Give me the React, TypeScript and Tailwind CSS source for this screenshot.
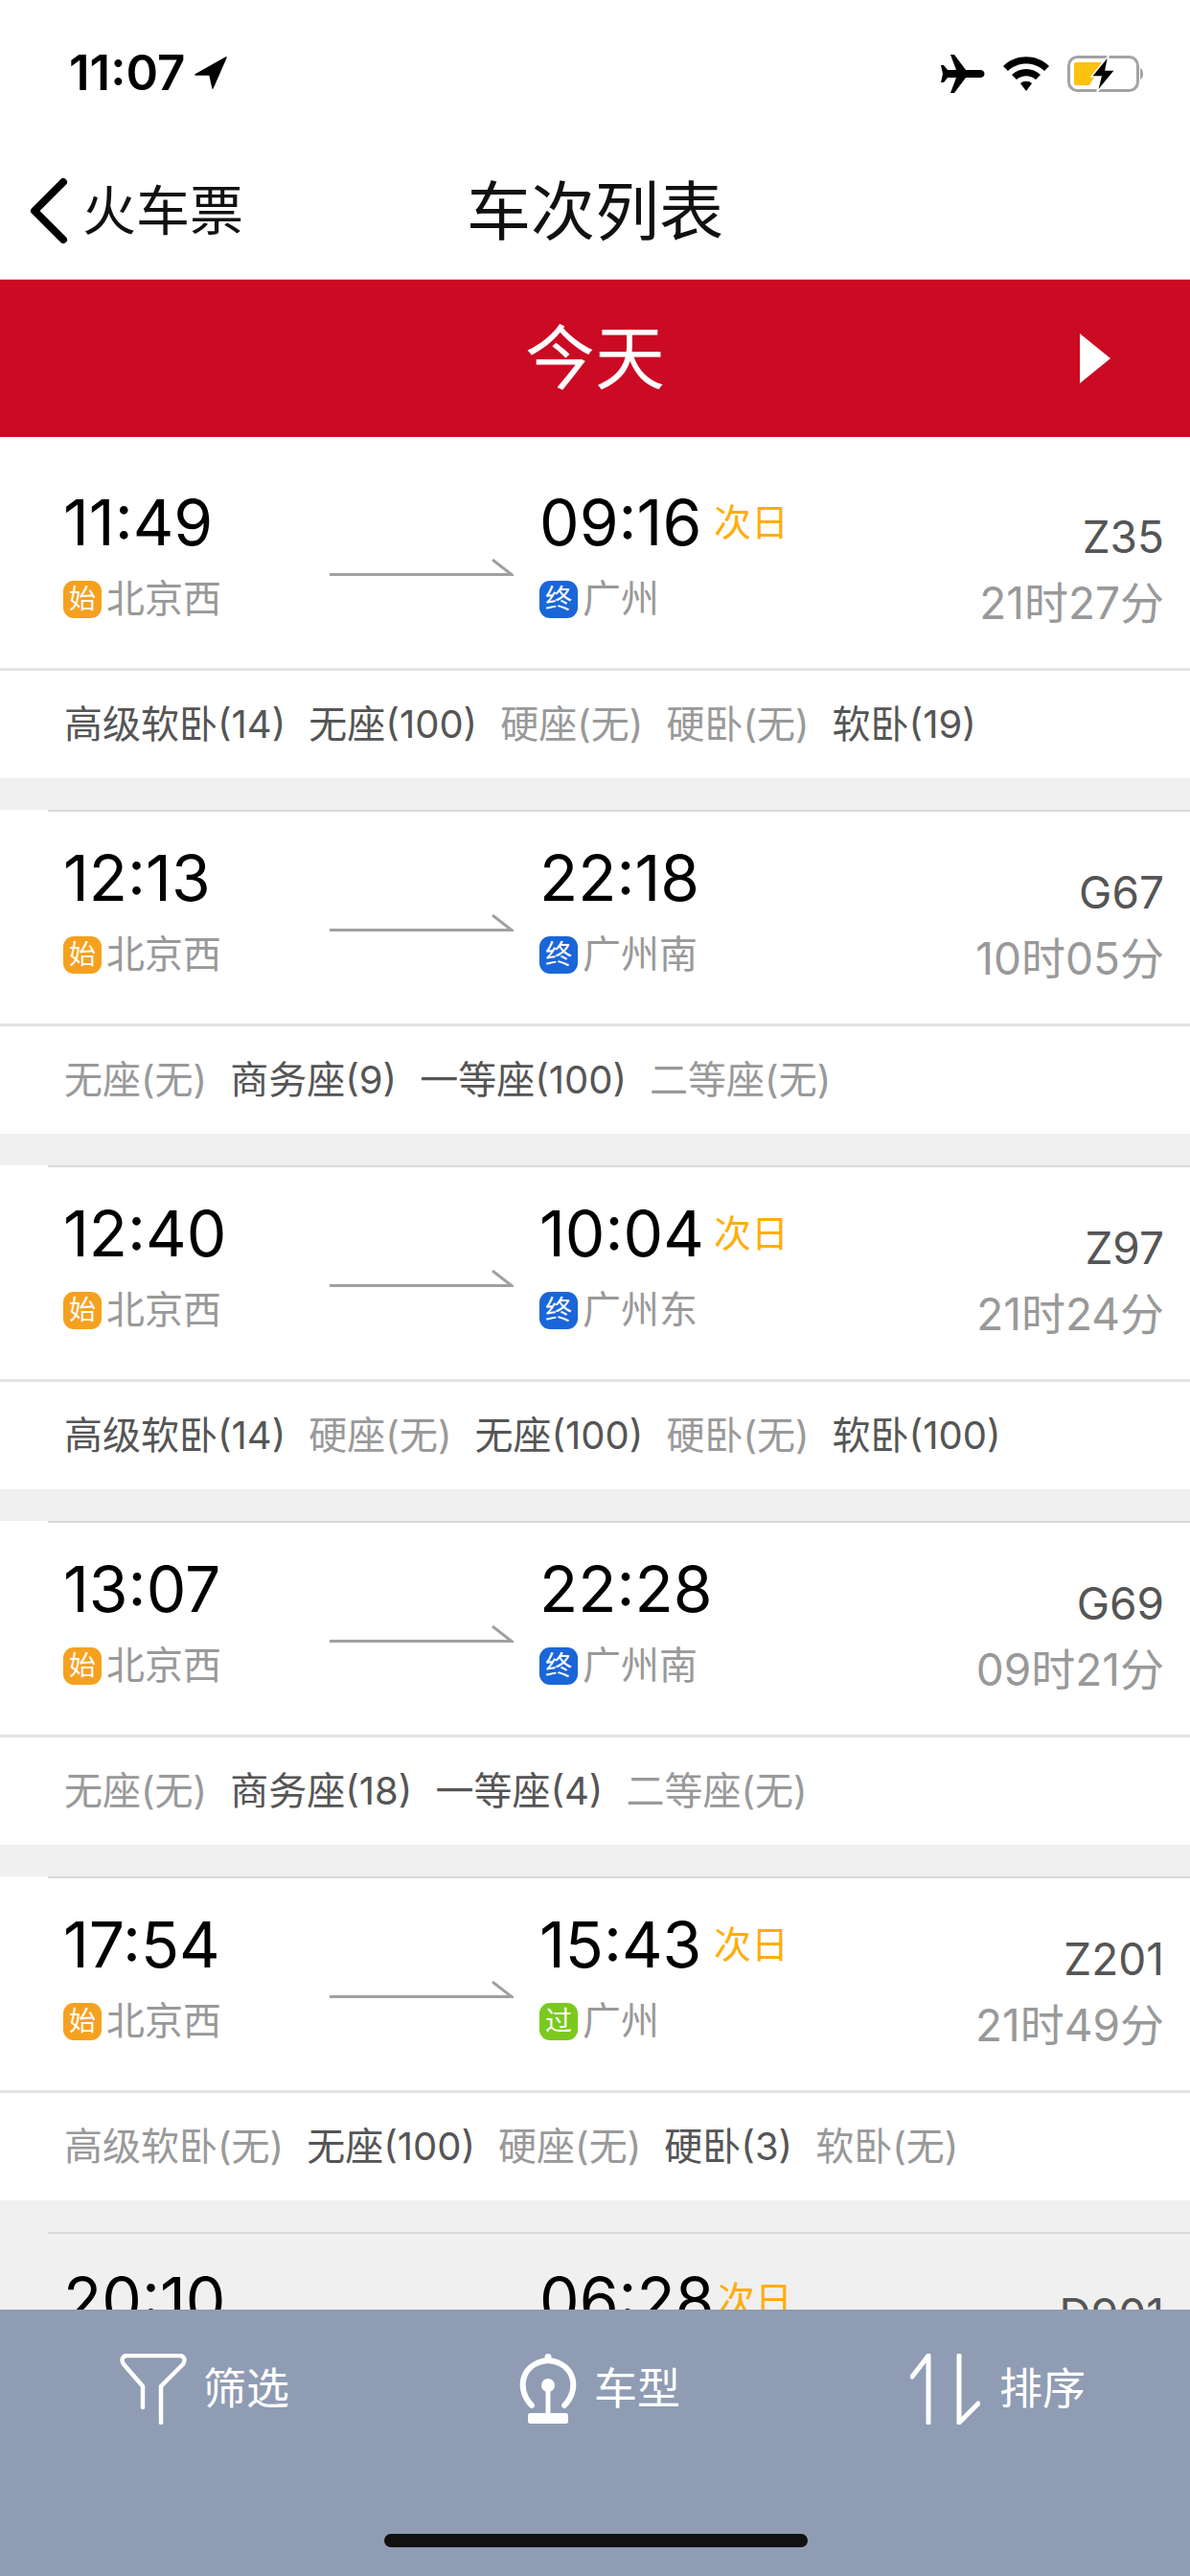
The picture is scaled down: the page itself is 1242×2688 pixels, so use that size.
const fontStack = "font-['Inter','Noto_Sans_CJK_SC',sans-serif]";

type Seat = { label: string; on: boolean };
type Train = {
    depart: string;
    arrive: string;
    nextDay?: boolean;
    stopType: "终" | "过";
    to: string;
    code: string;
    duration: string;
    seats: Seat[];
};

const trains: Train[] = [
    {
        depart: "11:49", arrive: "09:16", nextDay: true, stopType: "终", to: "广州", code: "Z35", duration: "21时27分",
        seats: [
            { label: "高级软卧(14)", on: true },
            { label: "无座(100)", on: true },
            { label: "硬座(无)", on: false },
            { label: "硬卧(无)", on: false },
            { label: "软卧(19)", on: true },
        ],
    },
    {
        depart: "12:13", arrive: "22:18", stopType: "终", to: "广州南", code: "G67", duration: "10时05分",
        seats: [
            { label: "无座(无)", on: false },
            { label: "商务座(9)", on: true },
            { label: "一等座(100)", on: true },
            { label: "二等座(无)", on: false },
        ],
    },
    {
        depart: "12:40", arrive: "10:04", nextDay: true, stopType: "终", to: "广州东", code: "Z97", duration: "21时24分",
        seats: [
            { label: "高级软卧(14)", on: true },
            { label: "硬座(无)", on: false },
            { label: "无座(100)", on: true },
            { label: "硬卧(无)", on: false },
            { label: "软卧(100)", on: true },
        ],
    },
    {
        depart: "13:07", arrive: "22:28", stopType: "终", to: "广州南", code: "G69", duration: "09时21分",
        seats: [
            { label: "无座(无)", on: false },
            { label: "商务座(18)", on: true },
            { label: "一等座(4)", on: true },
            { label: "二等座(无)", on: false },
        ],
    },
    {
        depart: "17:54", arrive: "15:43", nextDay: true, stopType: "过", to: "广州", code: "Z201", duration: "21时49分",
        seats: [
            { label: "高级软卧(无)", on: false },
            { label: "无座(100)", on: true },
            { label: "硬座(无)", on: false },
            { label: "硬卧(3)", on: true },
            { label: "软卧(无)", on: false },
        ],
    },
];

function StatusBar() {
    return (
        <div className="flex h-[150px] items-start justify-between pt-[54px] pl-[72px] pr-[48px]">
            <div className="flex items-center gap-[10px]">
                <span className="text-[51px] leading-[44px] font-semibold text-black">11:07</span>
                <svg width="34" height="34" viewBox="0 0 34 34">
                    <path d="M33 1 L1 19 L16 19 L19 33 Z" fill="#000" stroke="#000" strokeWidth="1.5" strokeLinejoin="round" />
                </svg>
            </div>
            <div className="mt-[3px] flex items-center gap-[18px]">
                <svg width="46" height="40" viewBox="0 0 46 40">
                    <path
                        d="M10 0 L14 0 L26 16 L41 16 C47 16 47 24 41 24 L26 24 L14 40 L10 40 L16 24 L7 24 L3 29 L0 29 L2 20 L0 11 L3 11 L7 16 L16 16 Z"
                        fill="#000"
                    />
                </svg>
                <svg width="50" height="38" viewBox="0 0 50 38">
                    <path d="M1 11 C14 -2 36 -2 49 11 L44 16 C34 6 16 6 6 16 Z" fill="#000" />
                    <path d="M10 20 C18 12 32 12 40 20 L35 25 C29 20 21 20 15 25 Z" fill="#000" />
                    <path d="M19 29 C22 26 28 26 31 29 L25 37 Z" fill="#000" />
                </svg>
                <svg width="80" height="38" viewBox="0 0 80 38">
                    <rect x="1.5" y="1.5" width="72" height="35" rx="9" fill="none" stroke="#a3a3a3" strokeWidth="3" />
                    <path d="M7 9 Q7 7 9 7 L36 7 L30 19 L23 31 L9 31 Q7 31 7 29 Z" fill="#fbc20f" />
                    <path d="M76 13 C80 14 80 24 76 25 Z" fill="#a3a3a3" />
                    <path d="M43 0 L25 22 L35 22 L31 38 L50 15 L40 15 Z" fill="#000" stroke="#fff" strokeWidth="1.5" />
                </svg>
            </div>
        </div>
    );
}

function NavBar() {
    return (
        <div className="relative flex h-[142px] items-center justify-center border-b border-[#c8c8c8]">
            <div className="absolute left-[30px] top-[35px] flex items-center gap-[14px]">
                <svg width="42" height="70" viewBox="0 0 42 70">
                    <path d="M36 5 L6 35 L36 65" fill="none" stroke="#000" strokeWidth="8" strokeLinecap="round" strokeLinejoin="round" />
                </svg>
                <span className="text-[56px] leading-[70px] text-[#111]">火车票</span>
            </div>
            <span className="text-[67px] leading-[80px] text-[#111]">车次列表</span>
        </div>
    );
}

function RouteArrow() {
    return (
        <svg width="192" height="18" viewBox="0 0 192 18" className="mt-[73px]">
            <path d="M0 16.5 H190 L170 1" fill="none" stroke="#a0a0a0" strokeWidth="3" />
        </svg>
    );
}

function Badge({ text, color }: { text: string; color: string }) {
    return (
        <span className={`flex h-[39px] w-[40px] shrink-0 items-center justify-center rounded-[11px] text-[28px] leading-none text-white ${color}`}>
            {text}
        </span>
    );
}

function TrainRow({ train, first }: { train: Train; first: boolean }) {
    const stopColor = train.stopType === "过" ? "bg-[#7bc91e]" : "bg-[#1a66d9]";

    return (
        <div className="bg-white">
            {!first && <div className="ml-[50px] h-[2px] bg-[#d9d9d9]" />}
            <div className={`flex border-b-[3px] border-[#e2e2e2] ${first ? "pt-[54px] pb-[52px]" : "pt-[34px] pb-[52px]"}`}>
                <div className="w-[344px] pl-[66px]">
                    <div className="text-[66px] leading-[70px] text-black">{train.depart}</div>
                    <div className="mt-[25px] flex items-center gap-[5px]">
                        <Badge text="始" color="bg-[#f5a11f]" />
                        <span className="text-[40px] leading-[40px] text-[#999]">北京西</span>
                    </div>
                </div>
                <div className="w-[219px]">
                    <RouteArrow />
                </div>
                <div className="flex-1">
                    <div className="flex items-center">
                        <span className="w-[182px] text-[66px] leading-[70px] text-black">{train.arrive}</span>
                        {train.nextDay && <span className="text-[39px] leading-[50px] text-[#ffad0d]">次日</span>}
                    </div>
                    <div className="mt-[25px] flex items-center gap-[5px]">
                        <Badge text={train.stopType} color={stopColor} />
                        <span className="text-[40px] leading-[40px] text-[#999]">{train.to}</span>
                    </div>
                </div>
                <div className="mt-[34px] flex flex-col items-end pr-[27px]">
                    <span className="text-[46px] leading-[32px] text-[#555]">{train.code}</span>
                    <span className="mt-[37px] text-[46px] leading-[32px] text-[#999]">{train.duration}</span>
                </div>
            </div>
            <div className="flex h-[112px] items-center gap-[24px] pl-[67px] text-[40px] leading-[50px]">
                {train.seats.map((seat) => (
                    <span key={seat.label} className={seat.on ? "text-[#555]" : "text-[#999]"}>
                        {seat.label}
                    </span>
                ))}
            </div>
        </div>
    );
}

function LastRow() {
    return (
        <div className="bg-[#f0f0f0]">
            <div className="ml-[50px] h-[2px] bg-[#d9d9d9]" />
            <div className="flex pt-[34px]">
                <div className="w-[563px] pl-[66px] text-[66px] leading-[70px] text-black">20:10</div>
                <div className="flex flex-1 items-center">
                    <span className="w-[186px] text-[66px] leading-[70px] text-black">06:28</span>
                    <span className="text-[39px] leading-[50px] text-[#ffad0d]">次日</span>
                </div>
                <div className="mt-[34px] pr-[27px] text-[46px] leading-[32px] text-[#555]">D901</div>
            </div>
        </div>
    );
}

function BottomBar() {
    return (
        <div className="absolute bottom-0 left-0 h-[278px] w-full bg-[#8f9cb3]">
            <div className="flex gap-[240px] pt-[46px] pl-[125px]">
                <div className="flex items-center gap-[17px]">
                    <svg width="70" height="74" viewBox="0 0 70 74">
                        <path
                            d="M24 56 V34 L4 11 C1 6 3 2 8 2 H62 C67 2 69 6 66 11 L43 34 V72"
                            fill="none"
                            stroke="#fff"
                            strokeWidth="4.5"
                            strokeLinecap="round"
                            strokeLinejoin="round"
                        />
                    </svg>
                    <span className="text-[45px] leading-[50px] text-white">筛选</span>
                </div>
                <div className="flex items-center gap-[18px]">
                    <svg width="60" height="74" viewBox="0 0 60 74">
                        <path
                            d="M13 54 C-3 38 1 10 30 7 C59 10 63 38 47 54"
                            fill="none"
                            stroke="#fff"
                            strokeWidth="6"
                            strokeLinecap="round"
                        />
                        <circle cx="30" cy="3.5" r="3.5" fill="#fff" />
                        <circle cx="30" cy="33" r="7" fill="#fff" />
                        <rect x="27.5" y="33" width="5" height="30" fill="#fff" />
                        <rect x="9" y="62" width="42" height="11" rx="2.5" fill="#fff" />
                    </svg>
                    <span className="text-[45px] leading-[50px] text-white">车型</span>
                </div>
                <div className="flex items-center gap-[20px]">
                    <svg width="73" height="74" viewBox="0 0 73 74">
                        <path d="M19 72 V2 L2 24" fill="none" stroke="#fff" strokeWidth="5" strokeLinecap="round" strokeLinejoin="round" />
                        <path d="M51 2 V72 L71 52" fill="none" stroke="#fff" strokeWidth="5" strokeLinecap="round" strokeLinejoin="round" />
                    </svg>
                    <span className="text-[45px] leading-[50px] text-white">排序</span>
                </div>
            </div>
            <div className="absolute bottom-[30px] left-[401px] h-[14px] w-[442px] rounded-full bg-[#111]" />
        </div>
    );
}

export default function App() {
    return (
        <div className={`relative h-[2688px] w-[1242px] overflow-hidden bg-[#f0f0f0] ${fontStack}`}>
            <div className="bg-white">
                <StatusBar />
                <NavBar />
            </div>
            <div className="relative flex h-[164px] items-center justify-center bg-[#cb0a23]">
                <span className="text-[73px] leading-[80px] text-white">今天</span>
                <svg width="32" height="52" viewBox="0 0 32 52" className="absolute left-[1127px] top-[56px]">
                    <path d="M0 0 L32 26 L0 52 Z" fill="#fff" />
                </svg>
            </div>
            <div className="flex flex-col gap-[33px]">
                {trains.map((train, index) => (
                    <TrainRow key={train.code} train={train} first={index === 0} />
                ))}
                <LastRow />
            </div>
            <BottomBar />
        </div>
    );
}
